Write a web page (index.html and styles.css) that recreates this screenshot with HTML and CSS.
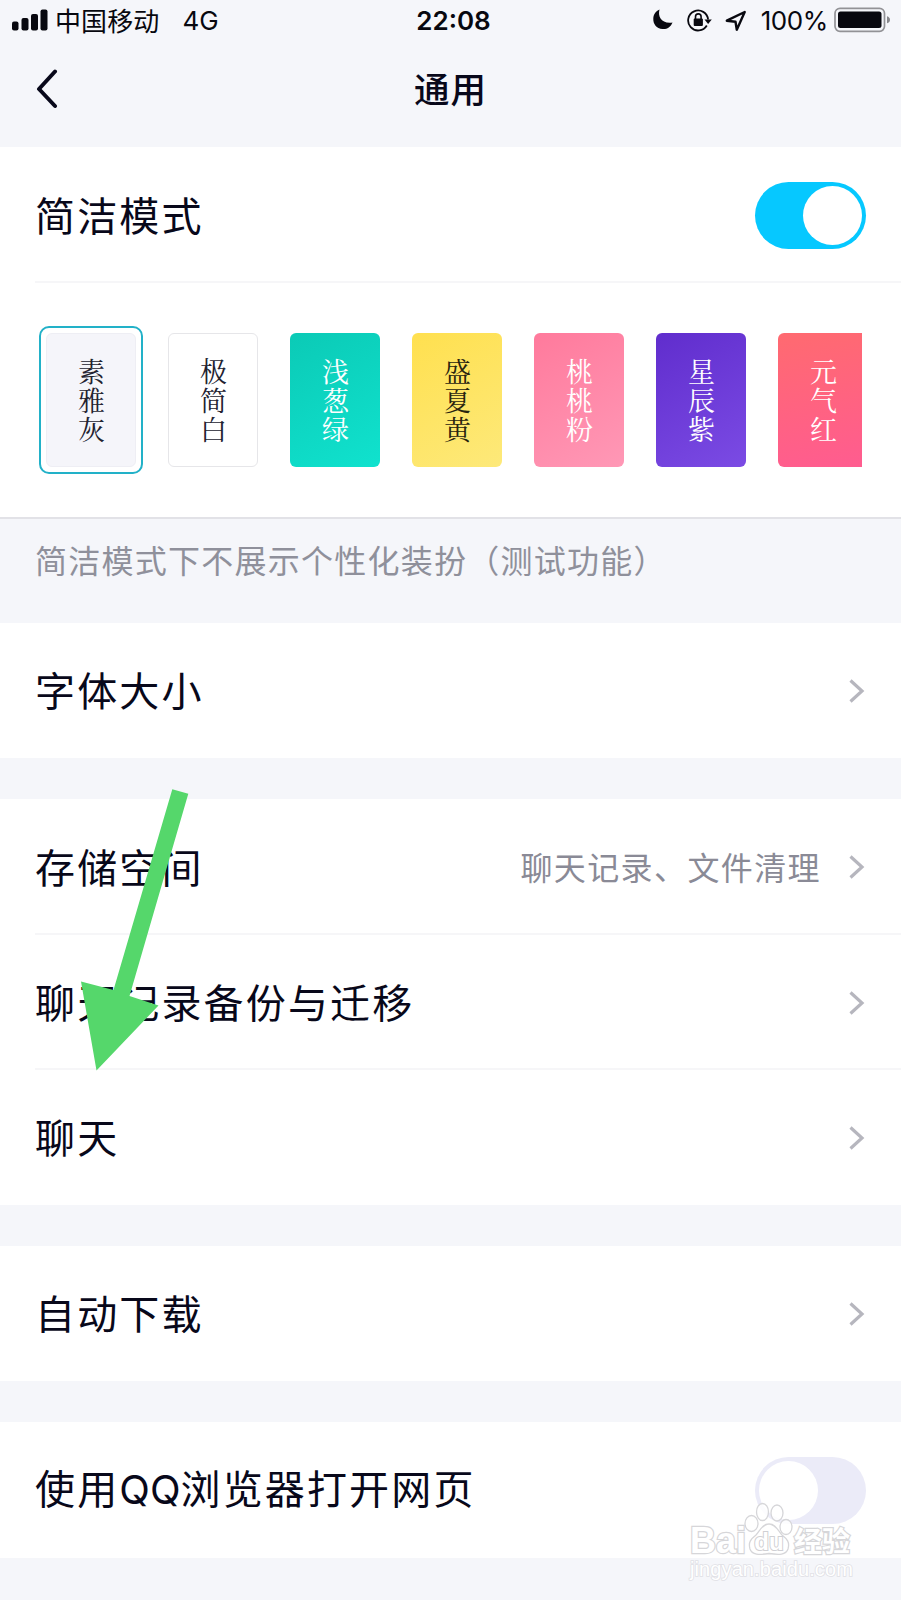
FILE: index.html
```html
<!DOCTYPE html>
<html lang="zh-CN">
<head>
<meta charset="utf-8">
<title>通用</title>
<link rel="stylesheet" href="styles.css">
</head>
<body>
<main class="screen">
  <div class="status">
    <div class="status-left">
      <svg class="signal" width="36" height="22" viewBox="0 0 36 22"><rect y="12.500" width="6.500" height="9" rx="2"/><rect x="9.500" y="9" width="7" height="12.500" rx="2"/><rect x="19" y="5" width="7" height="16.500" rx="2"/><rect x="28.500" y="0.500" width="7" height="21" rx="2"/></svg>
      <span class="carrier">中国移动</span>
      <span class="network">4G</span>
    </div>
    <span class="clock">22:08</span>
    <div class="status-right">
      <svg class="moon" width="20" height="21" viewBox="0 0 20 21"><path d="M6.500.5C4.500 7.500 8.500 15 19.500 13.500C17.500 18.500 13.500 20.500 9.500 20C3.500 19.500 0 15 .3 9.500C.5 5.500 2.800 2 6.500.5Z"/></svg>
      <svg class="lock" width="25" height="23" viewBox="0 0 25 23"><path d="M19.800 16.500A10 10 0 1 1 21.100 10.500" fill="none" stroke="#08080f" stroke-width="1.800"/><path d="M17.500 10.500h7.300l-3.700 4.600z"/><rect x="6.700" y="9.500" width="9.200" height="7.600" rx="1"/><path d="M8.500 10V7.700a2.800 2.800 0 0 1 5.600 0V10" fill="none" stroke="#08080f" stroke-width="1.600"/></svg>
      <svg class="locate" width="22" height="22" viewBox="0 0 22 22"><path d="M1.800 10.700L19.700 2L11.800 19.700L10.500 11.800Z" fill="none" stroke="#08080f" stroke-width="2.400" stroke-linejoin="round"/></svg>
      <span class="percent">100%</span>
      <svg class="battery" width="57" height="26" viewBox="0 0 57 26"><rect x="1" y="1.300" width="49.500" height="23" rx="5" fill="none" stroke="#929296" stroke-width="1.700"/><rect x="4" y="4.500" width="43.500" height="16.500" rx="2.500"/><path d="M53 9.300q3 1 3 3.500t-3 3.500z" fill="#88888c"/></svg>
    </div>
  </div>
  <header class="nav">
    <svg class="back" width="24" height="40" viewBox="0 0 24 40"><path d="M19 2.500L3 20L19 37" fill="none" stroke="#08081a" stroke-width="4" stroke-linecap="round" stroke-linejoin="round"/></svg>
    <h1 class="title">通用</h1>
  </header>

  <section class="group">
    <div class="row tall"><span class="label">简洁模式</span><span class="toggle on"><i class="knob"></i></span></div>
    <div class="themes">
      <div class="theme selected"><span class="theme-face gray">素雅灰</span></div>
      <div class="theme"><span class="theme-face white">极简白</span></div>
      <div class="theme"><span class="theme-face green">浅葱绿</span></div>
      <div class="theme"><span class="theme-face yellow">盛夏黄</span></div>
      <div class="theme"><span class="theme-face pink">桃桃粉</span></div>
      <div class="theme"><span class="theme-face purple">星辰紫</span></div>
      <div class="theme"><span class="theme-face red">元气红</span></div>
    </div>
  </section>
  <p class="note">简洁模式下不展示个性化装扮（测试功能）</p>

  <section class="group">
    <div class="row"><span class="label">字体大小</span><svg class="chevron" viewBox="0 0 18 26"><path d="M2.500 2.500L14 13L2.500 23.500"/></svg></div>
  </section>
  <section class="group">
    <div class="row tall"><span class="label">存储空间</span><span class="value">聊天记录、文件清理</span><svg class="chevron" viewBox="0 0 18 26"><path d="M2.500 2.500L14 13L2.500 23.500"/></svg></div>
    <div class="row"><span class="label">聊天记录备份与迁移</span><svg class="chevron" viewBox="0 0 18 26"><path d="M2.500 2.500L14 13L2.500 23.500"/></svg></div>
    <div class="row"><span class="label">聊天</span><svg class="chevron" viewBox="0 0 18 26"><path d="M2.500 2.500L14 13L2.500 23.500"/></svg></div>
  </section>
  <section class="group">
    <div class="row"><span class="label">自动下载</span><svg class="chevron" viewBox="0 0 18 26"><path d="M2.500 2.500L14 13L2.500 23.500"/></svg></div>
  </section>
  <section class="group">
    <div class="row tall"><span class="label">使用<span class="latin">QQ</span>浏览器打开网页</span><span class="toggle"><i class="knob"></i></span></div>
  </section>

  <svg class="pointer" width="80" height="284" viewBox="80 788 80 284"><path d="M172.300 789.300L188.300 793.800L129.500 996L158.500 1005.500L96.500 1070.500L81 981.500L113.500 990Z" fill="#55d76b"/></svg>

  <div class="watermark">
    <div class="mark-line">
      <span class="mark-text">Bai</span>
      <svg class="paw" width="50" height="54" viewBox="0 0 50 54"><g fill="#fff" fill-opacity=".85" stroke="#d6d6d9" stroke-width="1.300"><ellipse cx="18.500" cy="10" rx="6" ry="8.500"/><ellipse cx="33" cy="11" rx="6" ry="8"/><ellipse cx="7.500" cy="21.500" rx="6.500" ry="8"/><ellipse cx="42" cy="25" rx="6" ry="7.500"/><path d="M25 22c-7 0-9 7-13 11c-5 4-8 7-6 14c2 6 9 6 19 4.500c10 1.500 17 1.500 19-4.500c2-7-1-10-6-14c-4-4-6-11-13-11z"/></g><text x="25" y="48" text-anchor="middle" class="du">du</text></svg>
      <span class="mark-text cjk">经验</span>
    </div>
    <div class="mark-url">jingyan.baidu.com</div>
  </div>
</main>
</body>
</html>
```
FILE: styles.css
```css
* { box-sizing: border-box; }
body { margin: 0; background: #f5f6fa; }
svg { display: block; flex: none; }

.screen {
  position: relative;
  width: 901px;
  height: 1600px;
  overflow: hidden;
  background: #f5f6fa;
  color: #08081a;
  font-family: Inter, "Noto Sans CJK SC", sans-serif;
}

.status {
  display: grid;
  grid-template-columns: 1fr auto 1fr;
  align-items: center;
  height: 41px;
  padding: 0 10px 0 12px;
  font-size: 26px;
  line-height: 40px;
  color: #08080f;
}
.status svg { fill: #08080f; }
.status-left, .status-right { display: flex; align-items: center; }
.status-right { justify-content: flex-end; }
.signal { margin-top: -2px; }
.carrier { margin: -2px 0 0 7px; font-family: "Noto Sans CJK SC", sans-serif; font-size: 26px; letter-spacing: .1px; }
.network { margin-left: 23px; }
.clock { padding-left: 4px; font-weight: 600; letter-spacing: 0; }
.moon { margin-right: 14px; margin-top: -2px; }
.lock { margin-right: 13px; margin-top: -1px; }
.locate { margin-right: 14px; }
.percent { margin-right: 6px; letter-spacing: -.4px; }
.battery { margin-top: -1px; }

.nav {
  display: grid;
  grid-template-columns: 1fr auto 1fr;
  align-items: center;
  height: 106px;
  padding: 0 36px 10px;
}
.title {
  margin: -2px 0 0;
  font: 500 35.500px/52px "Noto Sans CJK SC", sans-serif;
  letter-spacing: 1px;
}

.group { margin-bottom: 41px; background: #fff; }
.row {
  display: flex;
  align-items: center;
  height: 135px;
  padding: 0 35px 0 35px;
  background: linear-gradient(#f6f6f8, #f6f6f8) 35px 100% / 100% 2px no-repeat;
}
.tall { height: 136px; }
.row:last-child { background: none; }
.label {
  margin: -3px auto 0 0;
  font-family: "Noto Sans CJK SC", sans-serif;
  font-size: 40px;
  line-height: 60px;
  letter-spacing: 2.150px;
  white-space: nowrap;
}
.latin { font-family: Inter, sans-serif; font-size: 40px; letter-spacing: 0; }
.value {
  margin: -3px 27px 0 0;
  font: 32px/48px "Noto Sans CJK SC", sans-serif;
  letter-spacing: 1.400px;
  color: #8a8a96;
}
.chevron { width: 18px; height: 26px; fill: none; stroke: #b6b6be; stroke-width: 3.200; }

.toggle {
  width: 111px;
  height: 67px;
  padding: 4px;
  border-radius: 34px;
  background: #ebebf8;
}
.toggle.on { display: flex; justify-content: flex-end; background: #06c8ff; }
.knob { display: block; width: 59px; height: 59px; border-radius: 50%; background: #fff; }

.themes {
  display: flex;
  gap: 18px;
  height: 234px;
  margin: 0 39px;
  padding-top: 43px;
  overflow: hidden;
}
.theme {
  flex: none;
  width: 104px;
  height: 148px;
  padding: 5px;
  border: 2px solid transparent;
  border-radius: 10px;
}
.selected { border-color: #22b1c8; }
.theme-face {
  display: flex;
  align-items: center;
  justify-content: center;
  width: 90px;
  height: 134px;
  padding-top: 3px;
  border-radius: 6px;
  font: 400 27px/28px "Noto Serif CJK SC", "Noto Sans CJK SC", serif;
  letter-spacing: 2px;
  writing-mode: vertical-rl;
  color: #fff;
}
.gray { background: #f5f5fa; border: 1px solid #eeeef4; color: #222230; }
.white { background: #fff; border: 1px solid #e6e6e9; color: #222230; }
.green { background: linear-gradient(150deg, #0bcab6, #10e2ce); }
.yellow { background: linear-gradient(150deg, #ffe04f, #fde97a); color: #28230f; }
.pink { background: linear-gradient(150deg, #ff7a9c, #ff98b6); }
.purple { background: linear-gradient(150deg, #602dcd, #7b4be4); }
.red { background: linear-gradient(170deg, #ff6a70, #ff5c90); }

.note {
  height: 106px;
  margin: -41px 0 0;
  padding: 16px 35px 0;
  border-top: 2px solid #e2e2e7;
  font: 32px/48px "Noto Sans CJK SC", sans-serif;
  letter-spacing: 1.250px;
  color: #8f909b;
}

.pointer { position: absolute; left: 80px; top: 788px; overflow: visible; }

.watermark { position: absolute; left: 690px; top: 1502px; width: 170px; }
.mark-line { display: flex; align-items: flex-end; height: 54px; }
.mark-text {
  font: 700 36px/36px "Liberation Sans", sans-serif;
  color: #fff;
  -webkit-text-stroke: 2.400px #d6d6d9;
  paint-order: stroke fill;
  margin-bottom: -3px;
}
.mark-text.cjk { margin-bottom: 2px; font: 700 28px/28px "Noto Sans CJK SC", sans-serif; }
.paw { margin: 0 0 0 -2px; }
.du { font: 700 24px "Liberation Sans", sans-serif; fill: #fff; stroke: #d0d0d4; stroke-width: 2; paint-order: stroke fill; }
.mark-url {
  font: 20px/22px "Liberation Sans", sans-serif;
  letter-spacing: .1px;
  margin-top: 2px;
  color: #fff;
  -webkit-text-stroke: 1.600px #e0e0e5;
  paint-order: stroke fill;
}
```
